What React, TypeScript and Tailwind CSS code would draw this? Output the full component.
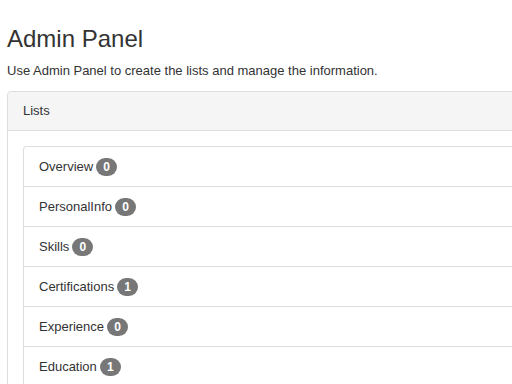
const lists = [
  { name: 'Overview', count: 0 },
  { name: 'PersonalInfo', count: 0 },
  { name: 'Skills', count: 0 },
  { name: 'Certifications', count: 1 },
  { name: 'Experience', count: 0 },
  { name: 'Education', count: 1 },
];

export default function App() {
  return (
    <div className="w-[512px] h-[384px] overflow-hidden bg-white font-['Liberation_Sans',Arial,sans-serif] text-[#333]">
      <div className="pl-[7px] w-[640px]">
        <h1 className="mt-[26px] text-[24px] leading-[26px]">Admin Panel</h1>
        <p className="mt-[10px] text-[13px] leading-[18px]">
          Use Admin Panel to create the lists and manage the information.
        </p>

        {/* panel */}
        <div className="mt-[11px] border border-[#ddd] rounded-[4px]">
          <div className="h-[39px] flex items-center px-[15px] bg-[#f5f5f5] border-b border-[#ddd] text-[13px] rounded-t-[4px]">
            Lists
          </div>
          <div className="p-[15px]">
            <ul className="border-t border-x border-[#ddd] rounded-t-[4px]">
              {lists.map((item) => (
                <li
                  key={item.name}
                  className="h-[40px] flex items-center px-[15px] border-b border-[#ddd] text-[13px]"
                >
                  <span>{item.name}</span>
                  <span className="ml-[3px] inline-flex items-center justify-center min-w-[21px] h-[18px] px-[7px] rounded-full bg-[#777] text-white text-[12px] font-bold leading-none">
                    {item.count}
                  </span>
                </li>
              ))}
            </ul>
          </div>
        </div>
      </div>
    </div>
  );
}
